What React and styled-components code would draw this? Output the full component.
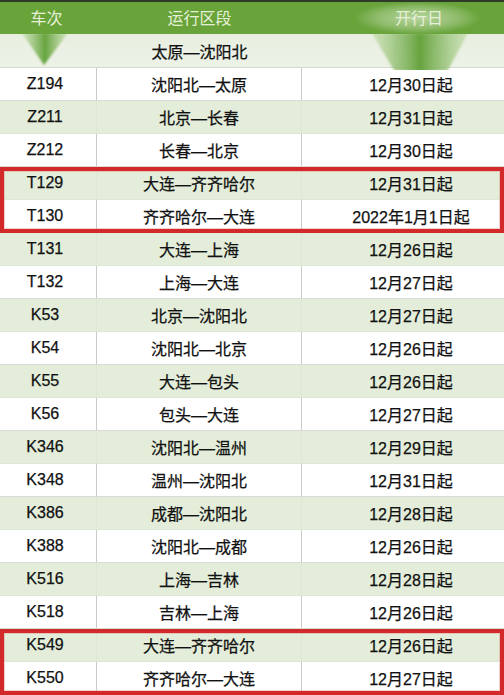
import React from "react";
import styled, { createGlobalStyle } from "styled-components";

const Global = createGlobalStyle`
  html, body { margin: 0; padding: 0; background: #ffffff; }
  body { font-family: "Liberation Sans", "Noto Sans CJK SC", sans-serif; }
`;

const Table = styled.div`
  position: relative;
  width: 504px;
  height: 695px;
  overflow: hidden;
  background: #ffffff;
  border-top: 2px solid #2f3a2a;
  box-sizing: border-box;
`;

const Header = styled.div`
  display: grid;
  grid-template-columns: 97px 205px 1fr;
  height: 32px;
  background: #69a43b;
  position: relative;
`;

const HeadCell = styled.div`
  display: flex;
  align-items: center;
  justify-content: center;
  color: #e6f0d8;
  font-family: "Noto Sans CJK SC", sans-serif;
  font-size: 16px;
  padding-left: ${(p) => p.$pl || 0}px;
  padding-right: ${(p) => p.$pr || 0}px;
  padding-bottom: 2px;
  position: relative;
  z-index: 2;
`;

const Glow = styled.div`
  position: absolute;
  left: 355px;
  top: 0;
  width: 125px;
  height: 32px;
  background: radial-gradient(ellipse at center, rgba(235, 245, 225, 0.6) 0%, rgba(235, 245, 225, 0.3) 45%, rgba(235, 245, 225, 0) 72%);
  z-index: 1;
`;

const RouteRow = styled.div`
  height: 34px;
  display: grid;
  grid-template-columns: 97px 205px 1fr;
  background: linear-gradient(#e8efe0, #edf2e7);
  border-bottom: 1px solid #d5dacf;
  box-sizing: border-box;
`;

const Row = styled.div`
  height: 33px;
  display: grid;
  grid-template-columns: 97px 205px 1fr;
  background: ${(p) => (p.$alt ? "#e3edd9" : "#ffffff")};
  border-bottom: 1px solid ${(p) => (p.$alt ? "#dfe6d8" : "#d9dcd6")};
  box-sizing: border-box;
`;

const Cell = styled.div`
  display: flex;
  align-items: center;
  justify-content: center;
  font-size: 16px;
  color: #111111;
  -webkit-text-stroke: 0.25px #111111;
  padding-left: ${(p) => p.$pl || 0}px;
  padding-right: ${(p) => p.$pr || 0}px;
  border-right: ${(p) => (p.$line ? `1px solid ${p.$alt ? "#dfe6d8" : "#c9cbc6"}` : "none")};
`;

const Group = styled.div`
  position: relative;
  &::after {
    content: "";
    position: absolute;
    inset: 0;
    border: 4px solid #d22a2a;
    box-shadow: inset 0 0 0 1px rgba(230, 120, 120, 0.35);
    pointer-events: none;
    z-index: 3;
  }
`;

const Deco = styled.svg`
  position: absolute;
  left: 0;
  top: 0;
  width: 504px;
  height: 80px;
  pointer-events: none;
  z-index: 2;
`;

const rows = [
  ["Z194", "沈阳北—太原", "12月30日起"],
  ["Z211", "北京—长春", "12月31日起"],
  ["Z212", "长春—北京", "12月30日起"],
  ["T129", "大连—齐齐哈尔", "12月31日起", "g1"],
  ["T130", "齐齐哈尔—大连", "2022年1月1日起", "g1"],
  ["T131", "大连—上海", "12月26日起"],
  ["T132", "上海—大连", "12月27日起"],
  ["K53", "北京—沈阳北", "12月27日起"],
  ["K54", "沈阳北—北京", "12月26日起"],
  ["K55", "大连—包头", "12月26日起"],
  ["K56", "包头—大连", "12月27日起"],
  ["K346", "沈阳北—温州", "12月29日起"],
  ["K348", "温州—沈阳北", "12月31日起"],
  ["K386", "成都—沈阳北", "12月28日起"],
  ["K388", "沈阳北—成都", "12月26日起"],
  ["K516", "上海—吉林", "12月28日起"],
  ["K518", "吉林—上海", "12月26日起"],
  ["K549", "大连—齐齐哈尔", "12月26日起", "g2"],
  ["K550", "齐齐哈尔—大连", "12月27日起", "g2"],
];

function DataRow({ r, i }) {
  const alt = i % 2 === 1;
  return (
    <Row $alt={alt}>
      <Cell $alt={alt} $line $pr={6}>{r[0]}</Cell>
      <Cell $alt={alt} $line>{r[1]}</Cell>
      <Cell $alt={alt} $pl={16}>{r[2]}</Cell>
    </Row>
  );
}

export default function App() {
  const blocks = [];
  let k = 0;
  while (k < rows.length) {
    const g = rows[k][3];
    if (g) {
      const members = [];
      while (k < rows.length && rows[k][3] === g) {
        members.push(<DataRow key={k} r={rows[k]} i={k} />);
        k++;
      }
      blocks.push(<Group key={"g" + k}>{members}</Group>);
    } else {
      blocks.push(<DataRow key={k} r={rows[k]} i={k} />);
      k++;
    }
  }
  return (
    <>
      <Global />
      <Table>
        <Header>
          <Glow />
          <HeadCell $pr={4}>车次</HeadCell>
          <HeadCell>运行区段</HeadCell>
          <HeadCell $pl={32}>开行日</HeadCell>
        </Header>
        <RouteRow>
          <Cell />
          <Cell>太原—沈阳北</Cell>
          <Cell />
        </RouteRow>
        {blocks}
        <Deco viewBox="0 0 504 80">
          <defs>
            <linearGradient id="tg" x1="0" x2="1" y1="0" y2="0">
              <stop offset="0" stopColor="#b8d79c" stopOpacity="0.6" />
              <stop offset="0.5" stopColor="#5a9c2f" />
              <stop offset="1" stopColor="#b8d79c" stopOpacity="0.6" />
            </linearGradient>
            <filter id="bl" x="-20%" y="-20%" width="140%" height="140%">
              <feGaussianBlur stdDeviation="1" />
            </filter>
            <clipPath id="cp">
              <rect x="0" y="32" width="504" height="36" />
            </clipPath>
          </defs>
          <g clipPath="url(#cp)" opacity="0.92">
            <polygon points="22,31 68,31 44,63" fill="url(#tg)" filter="url(#bl)" />
            <polygon points="372,31 468,31 422,116" fill="url(#tg)" filter="url(#bl)" />
          </g>
        </Deco>
      </Table>
    </>
  );
}
